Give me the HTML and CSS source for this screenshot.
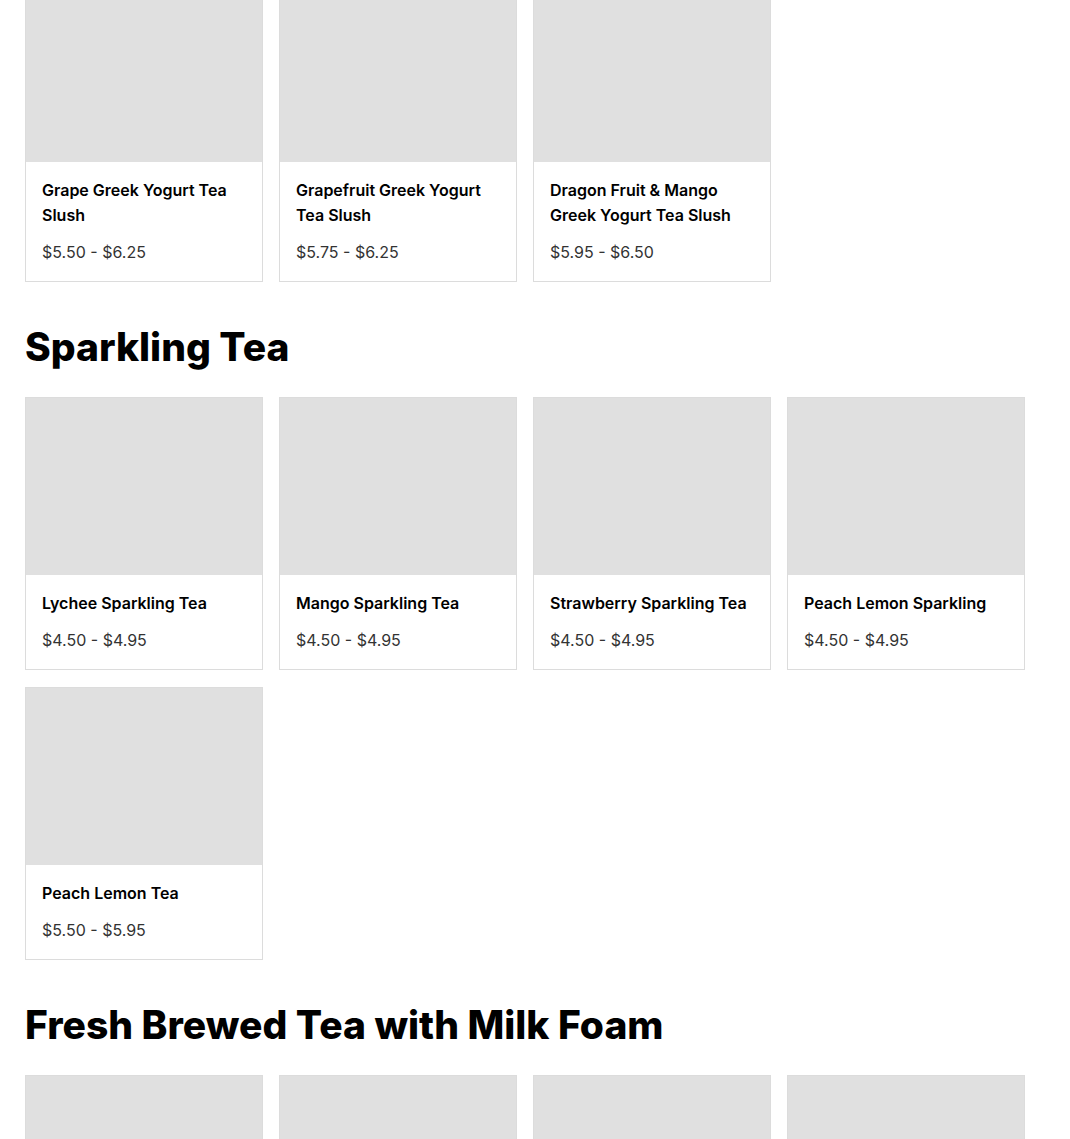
FILE: index.html
```html
<!DOCTYPE html>
<html lang="en">
<head>
    <meta charset="UTF-8">
    <meta name="viewport" content="width=device-width, initial-scale=1.0">
    <title>Menu</title>
    <link rel="stylesheet" href="styles.css">
</head>
<body>
    <main class="menu">
        <section class="category first">  <!--scrolled part of the previous category-->
            <div class="grid">
                <div class="card">
                    <div class="photo"></div>
                    <div class="info">
                        <div class="name">Grape Greek Yogurt Tea Slush</div>
                        <div class="price">$5.50 - $6.25</div>
                    </div>
                </div>
                <div class="card">
                    <div class="photo"></div>
                    <div class="info">
                        <div class="name">Grapefruit Greek Yogurt Tea Slush</div>
                        <div class="price">$5.75 - $6.25</div>
                    </div>
                </div>
                <div class="card">
                    <div class="photo"></div>
                    <div class="info">
                        <div class="name">Dragon Fruit &amp; Mango Greek Yogurt Tea Slush</div>
                        <div class="price">$5.95 - $6.50</div>
                    </div>
                </div>
            </div>
        </section>
        <section class="category">
            <h2 class="title">Sparkling Tea</h2>
            <div class="grid">
                <div class="card">
                    <div class="photo"></div>
                    <div class="info">
                        <div class="name">Lychee Sparkling Tea</div>
                        <div class="price">$4.50 - $4.95</div>
                    </div>
                </div>
                <div class="card">
                    <div class="photo"></div>
                    <div class="info">
                        <div class="name">Mango Sparkling Tea</div>
                        <div class="price">$4.50 - $4.95</div>
                    </div>
                </div>
                <div class="card">
                    <div class="photo"></div>
                    <div class="info">
                        <div class="name">Strawberry Sparkling Tea</div>
                        <div class="price">$4.50 - $4.95</div>
                    </div>
                </div>
                <div class="card">
                    <div class="photo"></div>
                    <div class="info">
                        <div class="name">Peach Lemon Sparkling</div>
                        <div class="price">$4.50 - $4.95</div>
                    </div>
                </div>
                <div class="card">
                    <div class="photo"></div>
                    <div class="info">
                        <div class="name">Peach Lemon Tea</div>
                        <div class="price">$5.50 - $5.95</div>
                    </div>
                </div>
            </div>
        </section>
        <section class="category">
            <h2 class="title">Fresh Brewed Tea with Milk Foam</h2>
            <div class="grid">
                <div class="card"><div class="photo"></div></div>
                <div class="card"><div class="photo"></div></div>
                <div class="card"><div class="photo"></div></div>
                <div class="card"><div class="photo"></div></div>
            </div>
        </section>
    </main>
</body>
</html>
```

FILE: styles.css
```css
body {
    margin: 0;
    background-color: #fff;
    font-family: "Inter", "Liberation Sans", sans-serif;
    color: #000;
}

.menu {
    width: 1000px;
    padding: 0 25px;
    margin-top: -16px;
}

.category {
    margin-bottom: 41px;
}

.title {
    margin: 0 0 26px 0;
    font-size: 39px;
    line-height: 48px;
    font-weight: 800;
}

.grid {
    display: grid;
    grid-template-columns: repeat(4, 238px);
    gap: 17px 16px;
    align-items: start;
}

.card {
    border: 1px solid #dcdcdc;
    background-color: #fff;
}

.photo {
    height: 177px;
    background-color: #e0e0e0;
}

.info {
    padding: 16px 16px 17px 16px;
}

.name {
    font-size: 16px;
    line-height: 25px;
    font-weight: 600;
}

.price {
    margin-top: 12px;
    font-size: 16px;
    line-height: 24px;
    color: #333;
}
```
